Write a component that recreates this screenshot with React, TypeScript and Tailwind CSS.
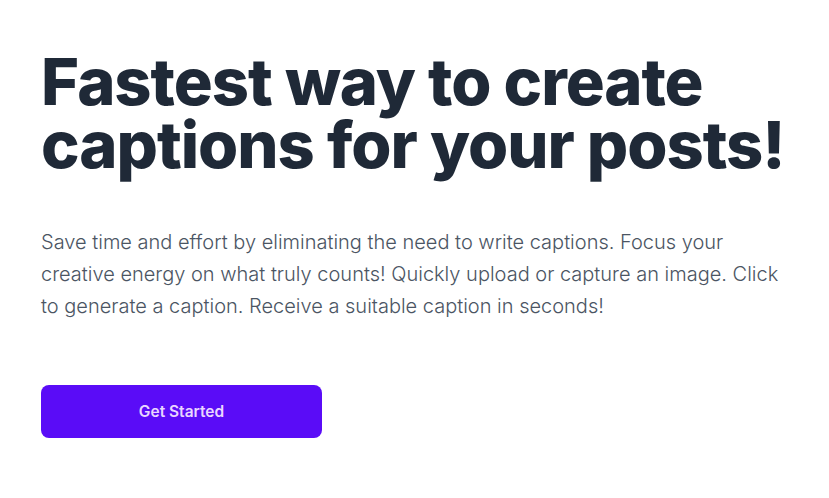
export default function App() {
  return (
    <div
      className="min-h-screen bg-white px-[41px] pt-[50px]"
      style={{ fontFamily: 'Inter, "Noto Sans", sans-serif' }}
    >
      <h1 className="max-w-[790px] text-[65px] font-extrabold leading-[63px] tracking-[-0.016em] text-[#1f2937]">
        Fastest way to create captions for your posts!
      </h1>
      <p className="mt-[50px] max-w-[750px] text-[20px] font-light leading-[32px] text-[#4b5563]">
        Save time and effort by eliminating the need to write captions. Focus your creative energy on what truly counts! Quickly upload or capture an image. Click to generate a caption. Receive a suitable caption in seconds!
      </p>
      <button className="mt-[63px] flex h-[53px] w-[281px] items-center justify-center rounded-lg bg-[#5a0cf7] text-[15.5px] font-semibold text-[#e9d5ff]">
        Get Started
      </button>
    </div>
  );
}
